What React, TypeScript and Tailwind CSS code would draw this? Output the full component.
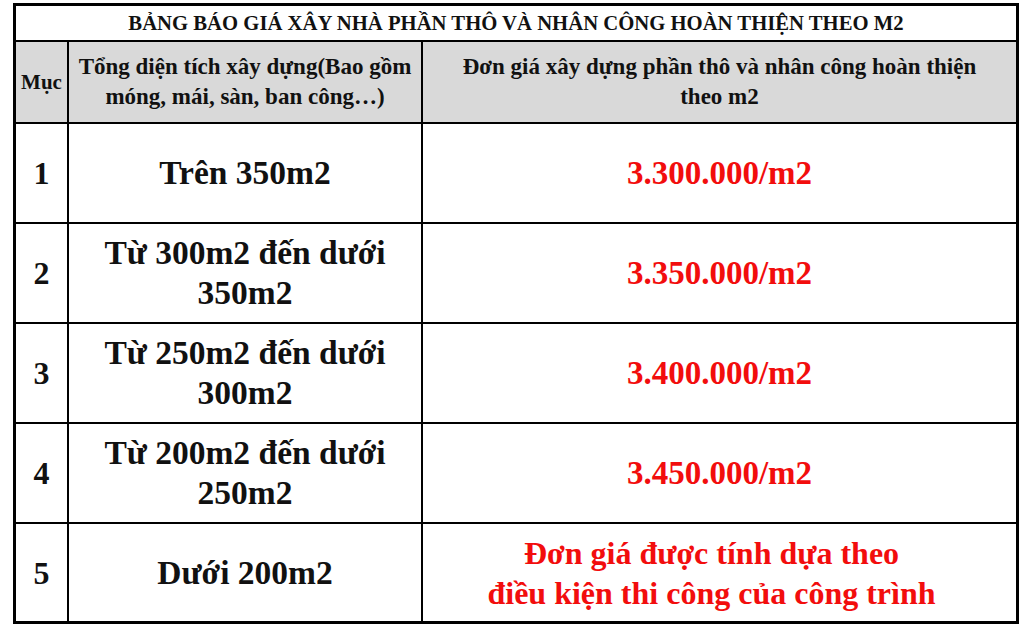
const rows = [
  { n: "1", area: ["Trên 350m2"], price: ["3.300.000/m2"] },
  { n: "2", area: ["Từ 300m2 đến dưới", "350m2"], price: ["3.350.000/m2"] },
  { n: "3", area: ["Từ 250m2 đến dưới", "300m2"], price: ["3.400.000/m2"] },
  { n: "4", area: ["Từ 200m2 đến dưới", "250m2"], price: ["3.450.000/m2"] },
  {
    n: "5",
    area: ["Dưới 200m2"],
    price: ["Đơn giá được tính dựa theo", "điều kiện thi công của công trình"],
  },
];

export default function App() {
  return (
    <div
      className="h-[626px] w-[1024px] overflow-hidden bg-white pl-[13px] pt-[3px] text-[#111]"
      style={{ fontFamily: '"Liberation Serif", "Times New Roman", serif' }}
    >
      <div className="w-[1006px] border-[3px] border-black font-bold">
        <div className="flex h-[36px] items-center justify-center border-b-2 border-black text-[20.7px] leading-none">
          BẢNG BÁO GIÁ XÂY NHÀ PHẦN THÔ VÀ NHÂN CÔNG HOÀN THIỆN THEO M2
        </div>

        <div className="grid h-[82px] grid-cols-[53px_354px_1fr] border-b-2 border-black bg-[#d9d9d9] text-center text-[23px] leading-[30px]">
          <div className="flex items-center justify-center border-r-2 border-black text-[21px]">Mục</div>
          <div className="flex items-center justify-center border-r-2 border-black">
            <p>
              Tổng diện tích xây dựng(Bao gồm
              <br />
              móng, mái, sàn, ban công…)
            </p>
          </div>
          <div className="flex items-center justify-center">
            <p>
              Đơn giá xây dựng phần thô và nhân công hoàn thiện
              <br />
              theo m2
            </p>
          </div>
        </div>

        {rows.map((r, i) => (
          <div
            key={r.n}
            className={
              i < rows.length - 1
                ? "grid h-[100px] grid-cols-[53px_354px_1fr] border-b-2 border-black text-center text-[32px] leading-[40px]"
                : "grid h-[97px] grid-cols-[53px_354px_1fr] text-center text-[32px] leading-[40px]"
            }
          >
            <div className="flex items-center justify-center border-r-2 border-black">{r.n}</div>
            <div className="flex items-center justify-center border-r-2 border-black text-[33.5px]">
              <p>
                {r.area.map((t) => (
                  <span key={t} className="block">
                    {t}
                  </span>
                ))}
              </p>
            </div>
            <div
              className={
                r.price.length > 1
                  ? "flex items-center justify-center pr-[16px] text-[#f20d0d]"
                  : "flex items-center justify-center text-[33px] text-[#f20d0d]"
              }
            >
              <p>
                {r.price.map((t) => (
                  <span key={t} className="block">
                    {t}
                  </span>
                ))}
              </p>
            </div>
          </div>
        ))}
      </div>
    </div>
  );
}
